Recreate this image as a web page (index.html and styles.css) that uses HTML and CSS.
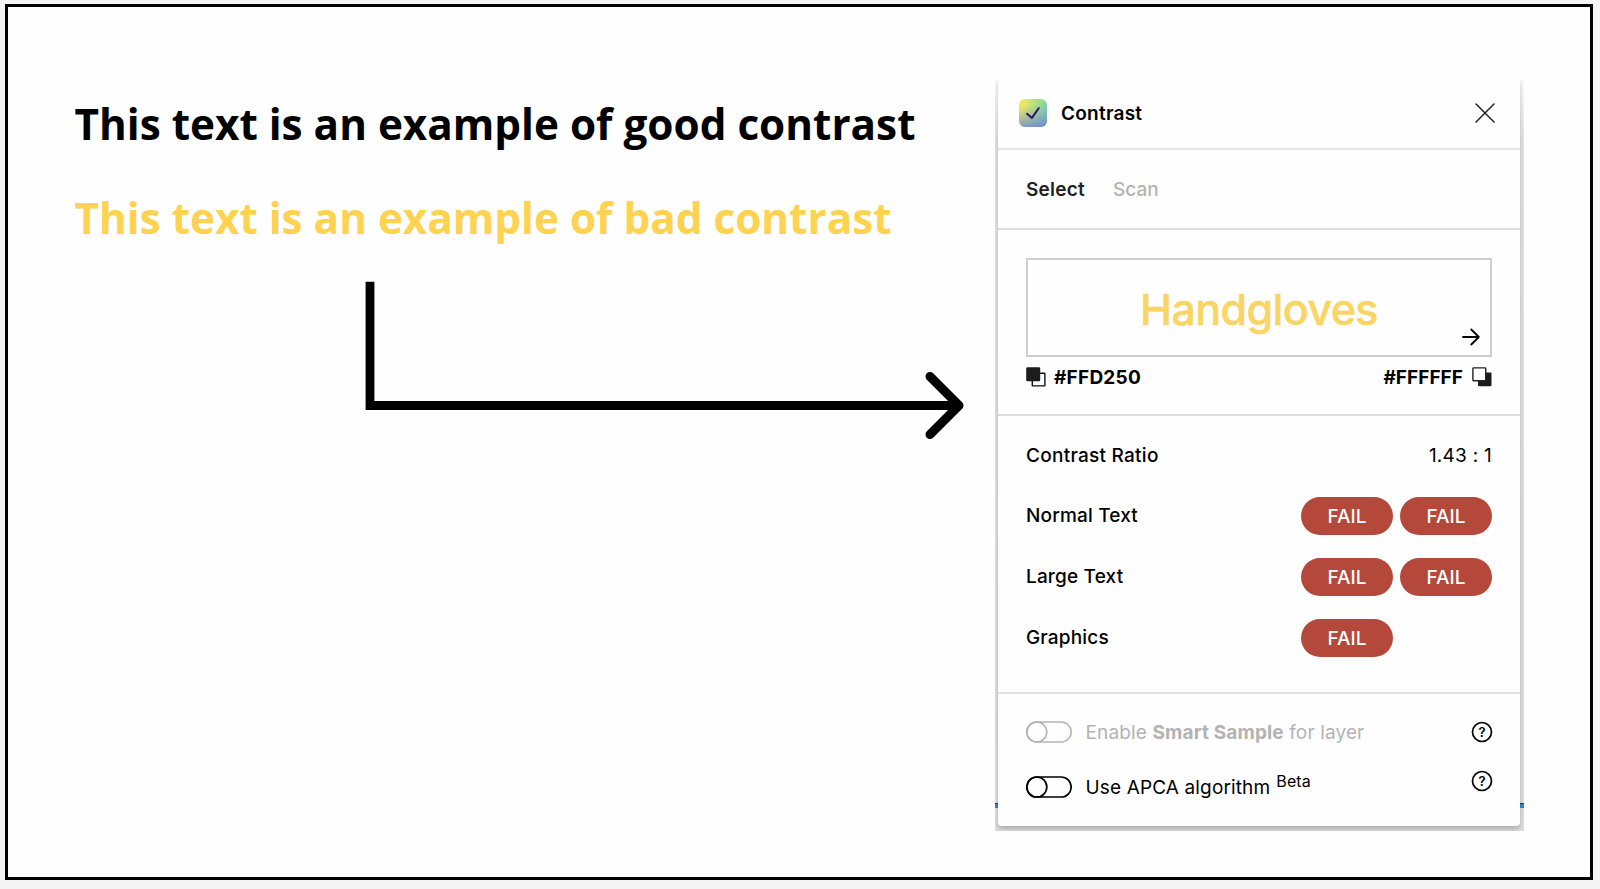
FILE: index.html
```
<!DOCTYPE html>
<html lang="en">
<head>
<meta charset="utf-8">
<title>Contrast</title>
<link rel="stylesheet" href="styles.css">
</head>
<body>
<main class="frame">
  <section class="examples">
    <p class="example example-good">This text is an example of good contrast</p>
    <p class="example example-bad">This text is an example of bad contrast</p>
    <svg class="pointer" width="600" height="164" viewBox="0 0 600 164" fill="none" stroke="#000">
      <path d="M5 .7V124.5H591" stroke-width="8.8"/>
      <path d="M565 95.5 594 124.5 565 153.5" stroke-width="9" stroke-linecap="round" stroke-linejoin="round"/>
    </svg>
  </section>
  <div class="panel-wrap">
  <aside class="panel">
    <header class="head">
      <svg class="logo" width="28" height="28" viewBox="0 0 28 28" fill="none">
        <defs>
          <linearGradient id="tint" x1="0" y1="0" x2="1" y2="0"><stop offset="0.1" stop-color="#f3e65c"/><stop offset="1" stop-color="#7fdba0"/></linearGradient>
          <linearGradient id="shade" x1=".4" y1="0" x2=".6" y2="1"><stop offset=".2" stop-color="#74a4d0" stop-opacity="0"/><stop offset="1" stop-color="#7590cc"/></linearGradient>
        </defs>
        <rect width="28" height="28" rx="6" fill="url(#tint)"/>
        <rect width="28" height="28" rx="6" fill="url(#shade)"/>
        <path d="M8 14.8 13 18.9 19.8 9" stroke="#2a1659" stroke-width="2" stroke-linecap="round" stroke-linejoin="round"/>
      </svg>
      <h1 class="title">Contrast</h1>
      <svg class="close" width="20" height="20" viewBox="0 0 20 20" stroke="#222" stroke-width="1.5" stroke-linecap="round"><path d="M1 1 19 19M19 1 1 19"/></svg>
    </header>
    <nav class="tabs"><span class="tab tab-on">Select</span><span class="tab tab-off">Scan</span></nav>
    <section class="sample">
      <div class="preview">
        <span class="word">Handgloves</span>
        <svg class="next" width="18" height="18" viewBox="0 0 18 18" fill="none" stroke="#000" stroke-width="1.8" stroke-linecap="round" stroke-linejoin="round"><path d="M1 9H16.8M9.3 1.5 16.8 9 9.3 16.5"/></svg>
      </div>
      <div class="colors">
        <svg width="20" height="20" viewBox="0 0 20 20"><rect x="6.3" y="6.3" width="12.6" height="12.6" rx=".5" fill="#fff" stroke="#111" stroke-width="1.4"/><rect x=".2" y=".2" width="14" height="14" rx="1.2" fill="#1c1c1e"/></svg>
        <span class="hex hex-front">#FFD250</span>
        <span class="hex hex-back">#FFFFFF</span>
        <svg width="20" height="20" viewBox="0 0 20 20"><rect x="6" y="5.6" width="13.5" height="13.6" rx="1" fill="#1c1c1e"/><rect x=".9" y=".9" width="12.8" height="12.8" rx=".7" fill="#fff" stroke="#222" stroke-width="1.4"/></svg>
      </div>
    </section>
    <section class="results">
      <div class="row"><span class="label label-ratio">Contrast Ratio</span><span class="ratio">1.43 : 1</span></div>
      <div class="row"><span class="label">Normal Text</span><span class="pills"><b class="pill">FAIL</b><b class="pill">FAIL</b></span></div>
      <div class="row"><span class="label">Large Text</span><span class="pills"><b class="pill">FAIL</b><b class="pill">FAIL</b></span></div>
      <div class="row"><span class="label">Graphics</span><span class="pills"><b class="pill">FAIL</b></span></div>
    </section>
    <footer class="options">
      <div class="option option-muted">
        <svg width="46" height="22" viewBox="0 0 46 22" fill="none" stroke="currentColor" stroke-width="1.5"><rect x=".8" y="1" width="44.4" height="20" rx="10"/><circle cx="10.8" cy="11" r="10"/></svg>
        <span class="option-text">Enable <b>Smart Sample</b> for layer</span>
        <svg class="help" width="22" height="22" viewBox="0 0 22 22"><circle cx="11" cy="11" r="9.5"/><text x="11" y="15.7">?</text></svg>
      </div>
      <div class="option option-apca">
        <svg width="46" height="22" viewBox="0 0 46 22" fill="none" stroke="currentColor" stroke-width="1.7"><rect x=".8" y="1" width="44.4" height="20" rx="10"/><circle cx="10.8" cy="11" r="10"/></svg>
        <span class="option-text">Use APCA algorithm</span><span class="beta">Beta</span>
        <svg class="help help-up" width="22" height="22" viewBox="0 0 22 22"><circle cx="11" cy="11" r="9.5"/><text x="11" y="15.7">?</text></svg>
      </div>
    </footer>
  </aside>
  </div>
</main>
</body>
</html>
```
FILE: styles.css
```
* { box-sizing: border-box; }
body { margin: 0; height: 889px; padding: 4px 7px 9px 5px; background: #f4f4f4; font-family: Inter, "Liberation Sans", sans-serif; color: #000; overflow: hidden; }
p, h1 { margin: 0; }
svg { display: block; flex: none; }
.frame { height: 876px; border: 3px solid #000; background: #fefefe; display: flex; justify-content: space-between; padding: 72px 66px 0 66.5px; }

.examples { margin-top: -2px; }
.example { font: 700 42.28px/93.5px "Open Sans", sans-serif; white-space: nowrap; }
.example-bad { color: #ffd250; }
.pointer { margin: 17px 0 0 290.5px; }

.panel-wrap { width: 529px; height: 752px; padding: 0 4px 5px 3px; overflow: hidden; background: linear-gradient(#fafafa, #e2e2e2 60px, #dcdcdc); position: relative; }
.panel-wrap::before { content: ""; position: absolute; left: 0; right: 0; top: 724px; height: 5px; background: linear-gradient(#24405f 1px, #2f83e4 1px); }
.panel { position: relative; height: 747px; background: #fefefe; border-radius: 4px; box-shadow: 0 3px 4px rgba(0,0,0,.2); font-size: 19px; letter-spacing: .25px; }

.head { height: 71px; border-bottom: 2px solid #e5e5e5; padding: 0 25px 2px 21px; display: flex; align-items: center; }
.title { font-size: 19px; font-weight: 600; margin-left: 14px; padding-top: 2px; }
.close { margin-left: auto; }
.tabs { height: 80px; border-bottom: 2px solid #ddd; padding: 1px 28px 0; display: flex; align-items: center; gap: 28px; font-weight: 600; }
.tab-on { color: #222; }
.tab-off { color: #b3b3b3; font-weight: 500; letter-spacing: 0; }

.sample { height: 186px; border-bottom: 2px solid #ddd; padding: 28px 28px 0; }
.preview { height: 99px; border: 2px solid #cfcfcf; position: relative; display: flex; justify-content: center; align-items: center; padding-top: 2px; }
.word { font-size: 43px; font-weight: 500; letter-spacing: -.6px; color: #f9d565; -webkit-text-stroke: .5px #f9d565; }
.next { position: absolute; right: 10px; bottom: 9px; }
.colors { display: flex; align-items: center; height: 40px; font-weight: 700; }
.hex-front { margin-left: 8px; }
.hex-back { margin: 0 9px 0 auto; letter-spacing: .05px; }

.results { height: 278px; border-bottom: 2px solid #e2e2e2; padding: 8px 28px 0; }
.row { height: 61px; display: flex; align-items: center; justify-content: space-between; }
.label { font-weight: 500; letter-spacing: .17px; }
.label-ratio { letter-spacing: .27px; padding-top: 1px; }
.ratio { padding-top: 1px; }
.pills { width: 191px; display: flex; gap: 7px; padding-top: 1px; }
.pill { width: 92px; height: 38px; border-radius: 19px; background: #b3483b; color: #fff; font-weight: 500; letter-spacing: 0; display: flex; align-items: center; justify-content: center; }

.options { padding: 10px 27px 0 28px; }
.option { height: 55px; display: flex; align-items: center; letter-spacing: .14px; }
.option-muted { color: #b3b3b3; }
.option-text { margin-left: 13.5px; white-space: pre; padding-top: 1px; }
.beta { font-size: 16px; margin: -12px 0 0 6px; }
.help { margin-left: auto; color: #000; }
.help-up { margin-top: -12px; }
.help circle { fill: none; stroke: #000; stroke-width: 1.7; }
.help text { font: 600 13px Inter, sans-serif; text-anchor: middle; fill: #000; }
```
